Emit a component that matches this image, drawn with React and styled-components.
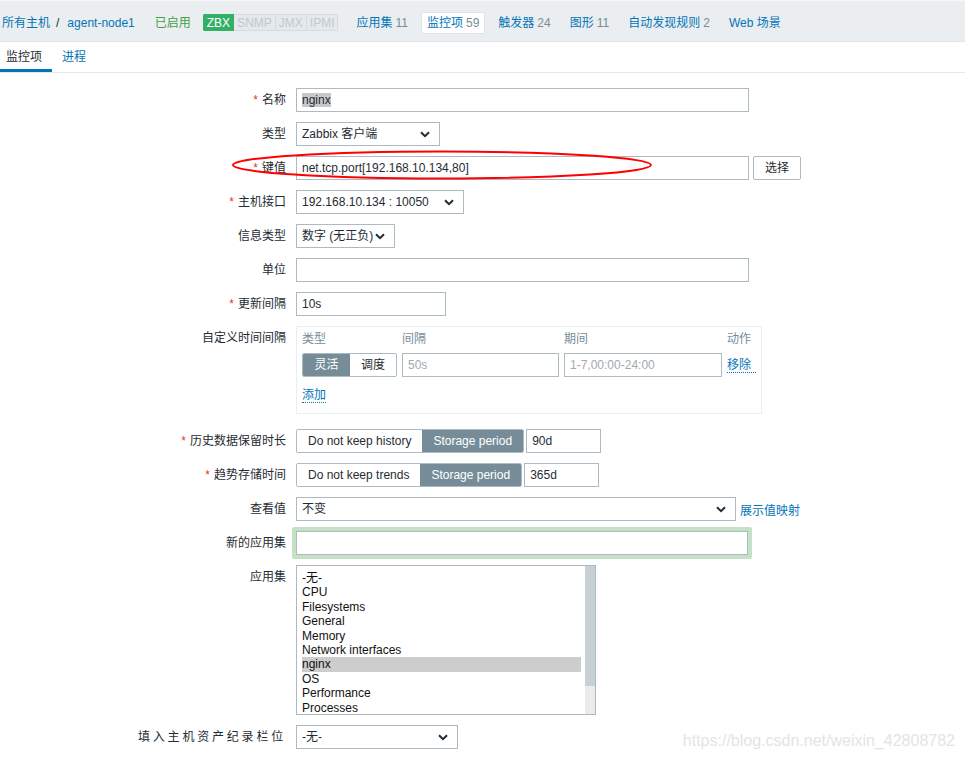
import React from 'react';
import styled, { createGlobalStyle } from 'styled-components';

const GlobalStyle = createGlobalStyle`
  body {
    margin: 0;
    background: #fff;
    font-family: "Liberation Sans", Arial, "Noto Sans CJK SC", sans-serif;
    font-size: 12px;
    color: #1f2c33;
  }
  * { box-sizing: border-box; }
`;

const Page = styled.div`
  position: relative;
  width: 965px;
  height: 760px;
  overflow: hidden;
`;

const Header = styled.div`
  height: 42px;
  background: #ebeef0;
  border-top: 1px solid #f4f6f7;
  border-bottom: 1px solid #dfe4e7;
  display: flex;
  align-items: center;
  padding: 3px 0 0 2px;
  white-space: nowrap;
  line-height: 14px;
`;

const Link = styled.span`
  color: #0275b8;
`;

const Sep = styled.span`
  margin: 0 8px 0 6px;
`;

const Status = styled.span`
  color: #429e47;
  margin-left: 20px;
`;

const Tags = styled.div`
  display: flex;
  margin-left: 12px;
  border-radius: 2px;
  overflow: hidden;
`;

const Tag = styled.span`
  padding: 0 3px;
  height: 17px;
  line-height: 16px;
  font-size: 12px;
  color: ${(p) => (p.$on ? '#fff' : '#bfc9ce')};
  background: ${(p) => (p.$on ? '#34af67' : '#e5e9eb')};
  border: 1px solid ${(p) => (p.$on ? '#34af67' : '#d5dce0')};
  border-left-width: ${(p) => (p.$first ? '1px' : '0')};
`;

const Nav = styled.div`
  display: flex;
  margin-left: 12px;
`;

const NavItem = styled.div`
  padding: 0 5px;
  height: 22px;
  display: flex;
  align-items: center;
  margin-right: 7px;
  border: 1px solid ${(p) => (p.$active ? '#dfe4e7' : 'transparent')};
  background: ${(p) => (p.$active ? '#fff' : 'transparent')};
  border-radius: 2px;
`;

const Count = styled.span`
  color: #768d99;
  margin-left: 3px;
`;

const Tabs = styled.div`
  display: flex;
  height: 31px;
  border-bottom: 1px solid #e6eaec;
`;

const Tab = styled.div`
  padding: 3px 10px 0;
  line-height: 25px;
  border-bottom: 3px solid ${(p) => (p.$active ? '#0275b8' : 'transparent')};
  color: ${(p) => (p.$active ? '#1f2c33' : '#0275b8')};
  &:first-child {
    margin-left: -4px;
  }
`;

const Form = styled.div`
  display: grid;
  grid-template-columns: 286px 640px;
  column-gap: 10px;
  row-gap: 10px;
  padding-top: 15px;
  align-items: start;
`;

const Label = styled.div`
  text-align: right;
  padding-top: 5px;
  line-height: 14px;
  white-space: nowrap;
  letter-spacing: ${(p) => p.$spread || 0}px;
`;

const Req = styled.span`
  color: #e33734;
  margin-right: 4px;
`;

const Field = styled.div`
  display: flex;
  align-items: center;
  gap: ${(p) => p.$gap || 4}px;
`;

const Input = styled.div`
  width: ${(p) => p.$w}px;
  height: 24px;
  border: 1px solid #acbbc2;
  padding: 0 5px;
  display: flex;
  align-items: center;
  line-height: 14px;
  white-space: nowrap;
  color: ${(p) => (p.$placeholder ? '#a3a9ad' : '#1f2c33')};
  background: #fff;
`;

const Selected = styled.span`
  background: #c8c8c8;
`;

const SelectBox = styled(Input)`
  justify-content: space-between;
  padding-right: 9px;
`;

const Chevron = () => (
  <svg width="10" height="7" viewBox="0 0 10 7">
    <polyline points="1,1.2 5,5.2 9,1.2" fill="none" stroke="#1f2c33" strokeWidth="2" />
  </svg>
);

const Select = ({ w, children }) => (
  <SelectBox $w={w}>
    <span>{children}</span>
    <Chevron />
  </SelectBox>
);

const Button = styled.div`
  height: 24px;
  width: 48px;
  border: 1px solid #acbbc2;
  border-radius: 2px;
  display: flex;
  align-items: center;
  justify-content: center;
  line-height: 14px;
`;

const Segmented = styled.div`
  display: flex;
  height: 24px;
  border: 1px solid #acbbc2;
  border-radius: 2px;
  overflow: hidden;
`;

const Seg = styled.div`
  width: ${(p) => (p.$w ? `${p.$w}px` : 'auto')};
  padding: 0 ${(p) => (p.$w ? 0 : 11)}px;
  display: flex;
  align-items: center;
  justify-content: center;
  line-height: 14px;
  white-space: nowrap;
  background: ${(p) => (p.$active ? '#768d99' : '#fff')};
  color: ${(p) => (p.$active ? '#fff' : '#1f2c33')};
`;

const IntervalBox = styled.div`
  width: 466px;
  border: 1px solid #ebeef0;
  padding: 5px 5px 11px;
  margin-bottom: 5px;
`;

const IntervalGrid = styled.div`
  display: grid;
  grid-template-columns: 95px 157px 158px auto;
  column-gap: 5px;
  row-gap: 7px;
  align-items: center;
  line-height: 14px;
`;

const Th = styled.div`
  color: #768d99;
  white-space: nowrap;
`;

const DotLink = styled.span`
  color: #0275b8;
  border-bottom: 1px dotted #0275b8;
  line-height: 14px;
  align-self: ${(p) => p.$self || 'auto'};
`;

const AddRow = styled.div`
  margin-top: 11px;
  line-height: 14px;
`;

const Glow = styled.div`
  border: 4px solid #c6e2c6;
  border-radius: 2px;
  margin: -4px;
  width: 460px;
`;

const Listbox = styled.div`
  width: 300px;
  height: 150px;
  border: 1px solid #acbbc2;
  display: flex;
  overflow: hidden;
`;

const ListItems = styled.div`
  flex: 1;
  padding: 5px 4px 0 5px;
  overflow: hidden;
`;

const ListItem = styled.div`
  height: 14.4px;
  line-height: 14.4px;
  white-space: nowrap;
  color: #111;
  background: ${(p) => (p.$sel ? '#cdcdcd' : 'transparent')};
`;

const Scrollbar = styled.div`
  width: 10px;
  background: #ebebeb;
  display: flex;
  flex-direction: column;
`;

const Thumb = styled.div`
  height: 120px;
  background: #c6d0d5;
`;

const Ellipse = styled.svg`
  position: absolute;
  left: 230px;
  top: 149px;
  pointer-events: none;
`;

const Watermark = styled.div`
  position: absolute;
  right: 10px;
  top: 732px;
  font-size: 16px;
  line-height: 18px;
  color: #e4e4e4;
`;

const apps = [
  '-无-',
  'CPU',
  'Filesystems',
  'General',
  'Memory',
  'Network interfaces',
  'nginx',
  'OS',
  'Performance',
  'Processes',
];

const navItems = [
  ['应用集', '11'],
  ['监控项', '59', true],
  ['触发器', '24'],
  ['图形', '11'],
  ['自动发现规则', '2'],
  ['Web 场景', null],
];

const App = () => (
  <Page>
    <GlobalStyle />
    <Header>
      <Link>所有主机</Link>
      <Sep>/</Sep>
      <Link>agent-node1</Link>
      <Status>已启用</Status>
      <Tags>
        <Tag $on $first>ZBX</Tag>
        <Tag>SNMP</Tag>
        <Tag>JMX</Tag>
        <Tag>IPMI</Tag>
      </Tags>
      <Nav>
        {navItems.map(([name, count, active]) => (
          <NavItem key={name} $active={active}>
            <Link>{name}</Link>
            {count && <Count>{count}</Count>}
          </NavItem>
        ))}
      </Nav>
    </Header>
    <Tabs>
      <Tab $active>监控项</Tab>
      <Tab>进程</Tab>
    </Tabs>

    <Form>
      <Label><Req>*</Req>名称</Label>
      <Field>
        <Input $w={453}><Selected>nginx</Selected></Input>
      </Field>

      <Label>类型</Label>
      <Field>
        <Select w={144}>Zabbix 客户端</Select>
      </Field>

      <Label><Req>*</Req>键值</Label>
      <Field>
        <Input $w={453}>net.tcp.port[192.168.10.134,80]</Input>
        <Button>选择</Button>
      </Field>

      <Label><Req>*</Req>主机接口</Label>
      <Field>
        <Select w={168}>192.168.10.134 : 10050</Select>
      </Field>

      <Label>信息类型</Label>
      <Field>
        <Select w={99}>数字 (无正负)</Select>
      </Field>

      <Label>单位</Label>
      <Field>
        <Input $w={453} />
      </Field>

      <Label><Req>*</Req>更新间隔</Label>
      <Field>
        <Input $w={150}>10s</Input>
      </Field>

      <Label>自定义时间间隔</Label>
      <IntervalBox>
        <IntervalGrid>
          <Th>类型</Th>
          <Th>间隔</Th>
          <Th>期间</Th>
          <Th>动作</Th>
          <Segmented>
            <Seg $w={47} $active>灵活</Seg>
            <Seg $w={46}>调度</Seg>
          </Segmented>
          <Input $w={157} $placeholder>50s</Input>
          <Input $w={158} $placeholder>1-7,00:00-24:00</Input>
          <DotLink $self="center">移除</DotLink>
        </IntervalGrid>
        <AddRow>
          <DotLink>添加</DotLink>
        </AddRow>
      </IntervalBox>

      <Label><Req>*</Req>历史数据保留时长</Label>
      <Field $gap={2}>
        <Segmented>
          <Seg>Do not keep history</Seg>
          <Seg $active>Storage period</Seg>
        </Segmented>
        <Input $w={75}>90d</Input>
      </Field>

      <Label><Req>*</Req>趋势存储时间</Label>
      <Field $gap={2}>
        <Segmented>
          <Seg>Do not keep trends</Seg>
          <Seg $active>Storage period</Seg>
        </Segmented>
        <Input $w={75}>365d</Input>
      </Field>

      <Label>查看值</Label>
      <Field>
        <Select w={440}>不变</Select>
        <Link>展示值映射</Link>
      </Field>

      <Label>新的应用集</Label>
      <Field>
        <Glow>
          <Input $w={452} />
        </Glow>
      </Field>

      <Label>应用集</Label>
      <Field>
        <Listbox>
          <ListItems>
            {apps.map((a) => (
              <ListItem key={a} $sel={a === 'nginx'}>{a}</ListItem>
            ))}
          </ListItems>
          <Scrollbar>
            <Thumb />
          </Scrollbar>
        </Listbox>
      </Field>

      <Label $spread={2.8}>填入主机资产纪录栏位</Label>
      <Field>
        <Select w={162}>-无-</Select>
      </Field>
    </Form>

    <Ellipse width="424" height="32" viewBox="0 0 424 32">
      <ellipse cx="212" cy="16" rx="209" ry="13.5" fill="none" stroke="#ff0000" strokeWidth="2" />
    </Ellipse>
    <Watermark>https://blog.csdn.net/weixin_42808782</Watermark>
  </Page>
);

export default App;
